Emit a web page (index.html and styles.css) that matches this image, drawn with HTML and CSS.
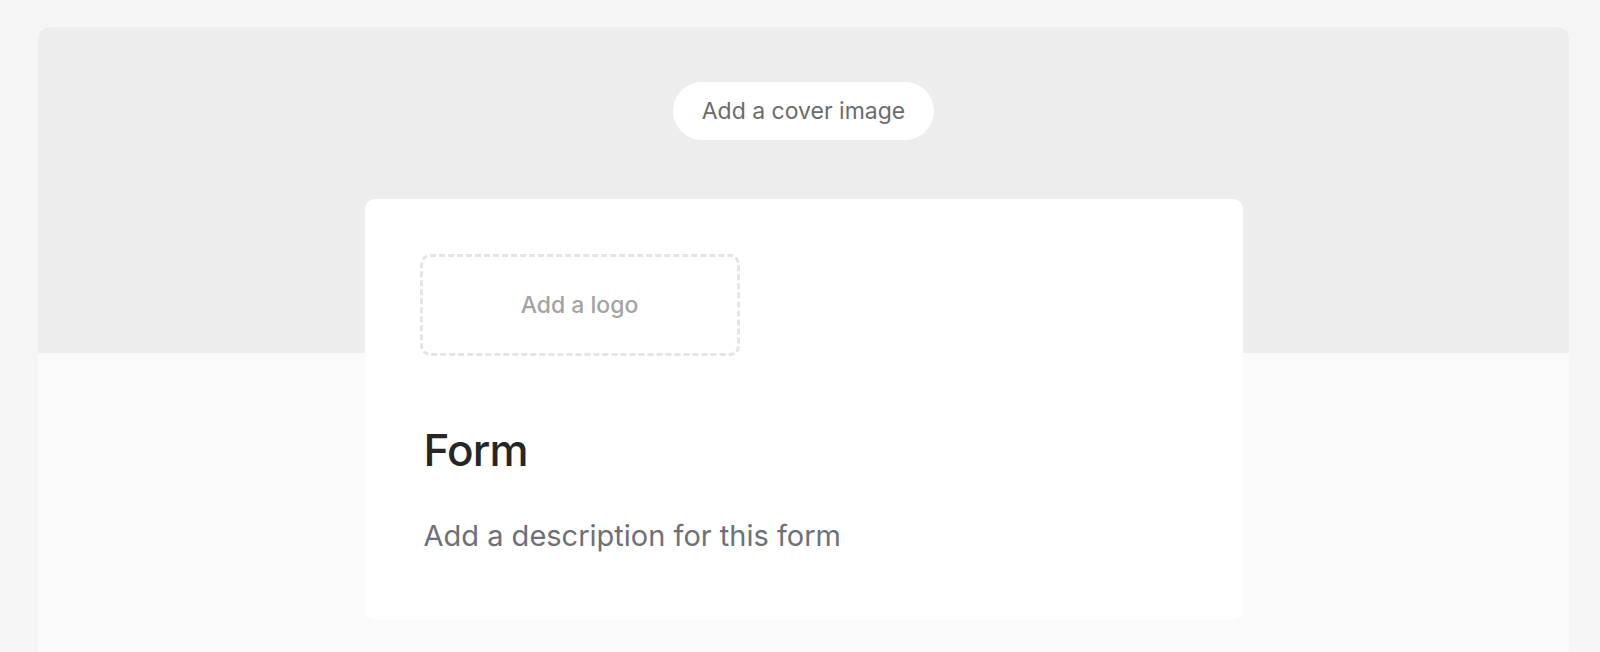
FILE: index.html
```html
<!DOCTYPE html>
<html lang="en">
<head>
<meta charset="utf-8">
<title>Form</title>
<link rel="stylesheet" href="styles.css">
</head>
<body>
  <div class="frame">
    <div class="cover">
      <button class="cover-btn">Add a cover image</button>
    </div>
    <div class="card">
      <div class="logo-box">Add a logo</div>
      <h1 class="title">Form</h1>
      <p class="desc">Add a description for this form</p>
    </div>
  </div>
</body>
</html>
```

FILE: styles.css
```css
html, body {
  margin: 0;
  padding: 0;
  background: #f5f5f5;
  font-family: "Inter", "Liberation Sans", sans-serif;
  height: 652px;
  overflow: hidden;
}
.frame {
  margin: 27px 31px 0 38px;
  background: #fafafa;
  border-radius: 12px 12px 0 0;
  height: 625px;
}
.cover {
  height: 326px;
  background: #ededed;
  border-radius: 12px 12px 0 0;
  box-sizing: border-box;
  padding-top: 55px;
  display: flex;
  justify-content: center;
  align-items: flex-start;
}
.cover-btn {
  width: 261px;
  height: 58px;
  border: none;
  border-radius: 29px;
  background: #ffffff;
  color: #6b6b6b;
  font-family: "Inter", "Liberation Sans", sans-serif;
  font-size: 23px;
  font-weight: 400;
  padding: 0;
  display: flex;
  align-items: center;
  justify-content: center;
}
.card {
  width: 878px;
  margin: -154px auto 0;
  background: #ffffff;
  border-radius: 10px;
  box-sizing: border-box;
  padding: 55px 56px 66px 55px;
}
.logo-box {
  width: 320px;
  height: 102px;
  box-sizing: border-box;
  border: 3px dashed #e4e4e4;
  border-radius: 10px;
  display: flex;
  align-items: center;
  justify-content: center;
  color: #a3a3a3;
  font-size: 23px;
  font-weight: 500;
}
.title {
  margin: 68px 0 0 4px;
  font-size: 44px;
  line-height: 52px;
  font-weight: 500;
  color: #262626;
  letter-spacing: -0.8px;
}
.desc {
  margin: 41px 0 0 4px;
  font-size: 29px;
  line-height: 37px;
  font-weight: 400;
  color: #6e7079;
}
```
